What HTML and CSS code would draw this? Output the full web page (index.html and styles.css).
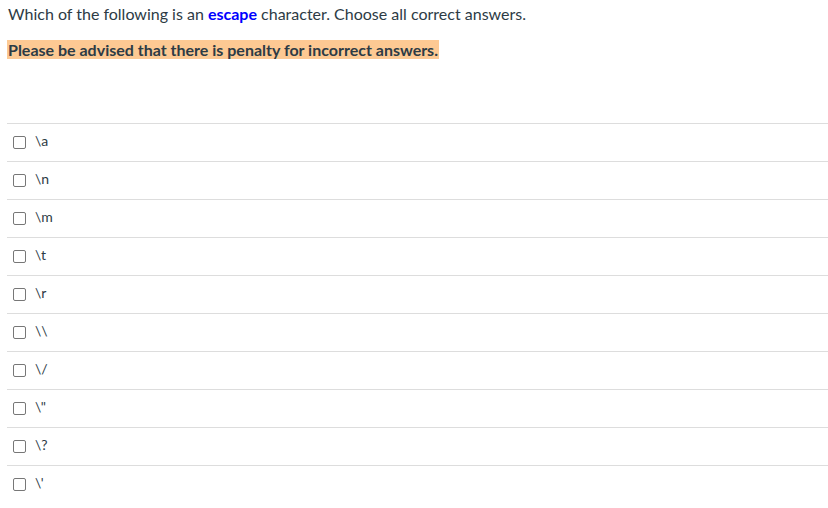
FILE: index.html
```html
<!DOCTYPE html>
<html>
<head>
<meta charset="utf-8">
<link rel="stylesheet" href="styles.css">
</head>
<body>
<div class="question">
  <p class="prompt">Which of the following is an <strong class="kw">escape</strong> character. Choose all correct answers.</p>
  <p class="warn"><strong class="hl">Please be advised that there is penalty for incorrect answers.</strong></p>
</div>
<div class="answers">
  <label class="answer"><span class="box"></span><span class="txt">\a</span></label>
  <label class="answer"><span class="box"></span><span class="txt">\n</span></label>
  <label class="answer"><span class="box"></span><span class="txt">\m</span></label>
  <label class="answer"><span class="box"></span><span class="txt">\t</span></label>
  <label class="answer"><span class="box"></span><span class="txt">\r</span></label>
  <label class="answer"><span class="box"></span><span class="txt">\\</span></label>
  <label class="answer"><span class="box"></span><span class="txt">\/</span></label>
  <label class="answer"><span class="box"></span><span class="txt">\"</span></label>
  <label class="answer"><span class="box"></span><span class="txt">\?</span></label>
  <label class="answer"><span class="box"></span><span class="txt">\'</span></label>
</div>
</body>
</html>
```

FILE: styles.css
```css
html, body {
  margin: 0;
  padding: 0;
  background: #ffffff;
}
body {
  font-family: Lato, "Liberation Sans", sans-serif;
  color: #2d3b45;
  padding-left: 7px;
  overflow: hidden;
}
.question {
  padding-left: 1px;
  height: 123px;
}
.prompt {
  margin: 0;
  padding-top: 4px;
  font-size: 16px;
  line-height: 20px;
}
.kw {
  color: #0000ff;
  font-weight: bold;
}
.warn {
  margin: 0;
  padding-top: 16px;
  font-size: 16px;
  line-height: 20px;
}
.hl {
  background: #fdc993;
  font-weight: bold;
  margin-left: -1px;
  padding: 0 1px;
}
.answers {
  display: flex;
  flex-direction: column;
}
.answer {
  display: flex;
  align-items: flex-start;
  height: 37px;
  border-top: 1px solid #dddddd;
  padding-left: 6px;
  font-size: 14px;
}
.box {
  width: 11px;
  height: 11px;
  margin-top: 12px;
  border: 1px solid #777777;
  border-radius: 2px;
  box-sizing: content-box;
  margin-right: 9px;
  background: #fff;
}
.txt {
  margin-top: 9px;
  line-height: 16px;
}
```
